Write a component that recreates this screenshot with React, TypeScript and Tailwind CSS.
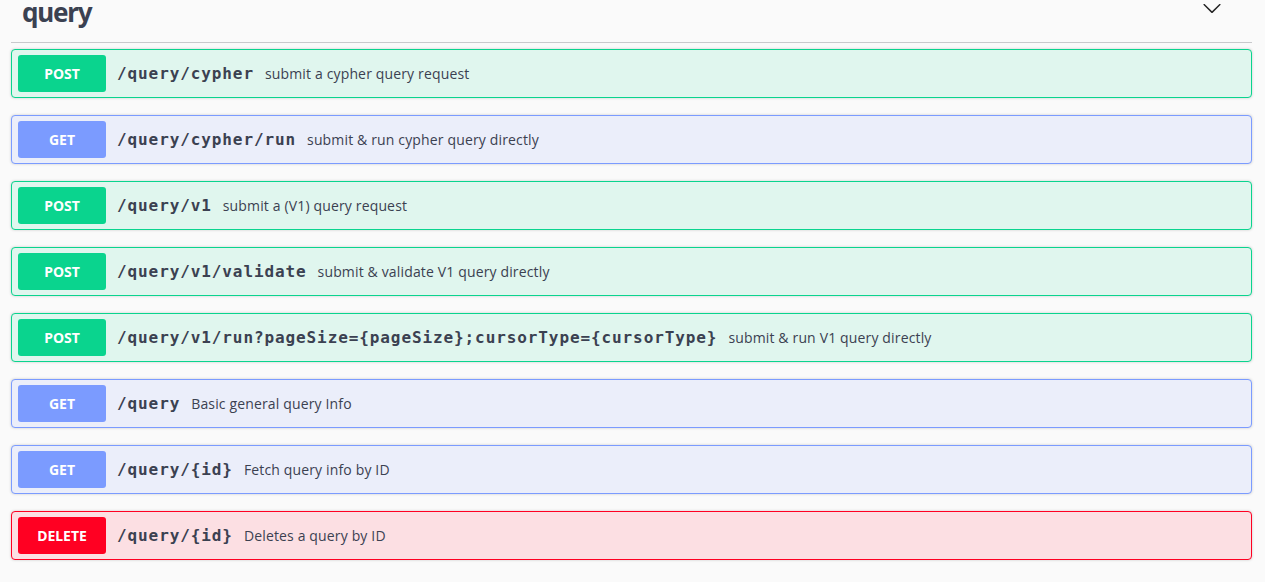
type Method = "POST" | "GET" | "DELETE";

type Endpoint = {
  method: Method;
  path: string;
  summary: string;
};

const endpoints: Endpoint[] = [
  { method: "POST", path: "/query/cypher", summary: "submit a cypher query request" },
  { method: "GET", path: "/query/cypher/run", summary: "submit & run cypher query directly" },
  { method: "POST", path: "/query/v1", summary: "submit a (V1) query request" },
  { method: "POST", path: "/query/v1/validate", summary: "submit & validate V1 query directly" },
  {
    method: "POST",
    path: "/query/v1/run?pageSize={pageSize};cursorType={cursorType}",
    summary: "submit & run V1 query directly",
  },
  { method: "GET", path: "/query", summary: "Basic general query Info" },
  { method: "GET", path: "/query/{id}", summary: "Fetch query info by ID" },
  { method: "DELETE", path: "/query/{id}", summary: "Deletes a query by ID" },
];

const styles: Record<Method, { row: string; badge: string }> = {
  POST: {
    row: "bg-[#e0f6ee] border-[#0ad48e]",
    badge: "bg-[#0ad48e]",
  },
  GET: {
    row: "bg-[#ebeefa] border-[#7b9bff]",
    badge: "bg-[#7b9bff]",
  },
  DELETE: {
    row: "bg-[#fcdfe3] border-[#ff0022]",
    badge: "bg-[#ff0022]",
  },
};

const OperationRow = ({ method, path, summary }: Endpoint) => {
  const s = styles[method];
  return (
    <div
      className={`${s.row} mb-[17px] flex items-center rounded-[4px] border px-[6px] py-[5px] shadow-[0_0_3px_rgba(0,0,0,0.19)]`}
    >
      <span
        className={`${s.badge} flex h-[37px] w-[88px] shrink-0 items-center justify-center rounded-[3px] text-[14px] font-bold text-white [font-family:'Noto_Sans',sans-serif]`}
      >
        {method}
      </span>
      <span className="ml-[11px] text-[16px] font-bold tracking-[0.9px] text-[#3b4151] [font-family:'DejaVu_Sans_Mono',monospace]">
        {path}
      </span>
      <span className="ml-[11px] text-[14px] tracking-[0.15px] text-[#3b4151] [font-family:'Open_Sans',sans-serif]">
        {summary}
      </span>
    </div>
  );
};

export default function App() {
  return (
    <div className="min-h-[582px] bg-[#fafafa] pl-[11px] pr-[13px]">
      {/* tag header, scrolled partly out of view */}
      <div className="flex h-[43px] items-start justify-between border-b border-[#c8c9cc]">
        <h3 className="-mt-[8px] ml-[11px] text-[26px] leading-[40px] font-bold tracking-[-1.2px] text-[#3b4151] [font-family:'Noto_Sans',sans-serif]">
          query
        </h3>
        <svg
          className="-mt-[2px] mr-[30px]"
          width="20"
          height="20"
          viewBox="0 0 20 20"
          fill="#222"
        >
          <path d="M17.418 6.109c.272-.268.709-.268.979 0s.271.701 0 .969l-7.908 7.83c-.27.268-.707.268-.979 0l-7.908-7.83c-.27-.268-.27-.701 0-.969.271-.268.709-.268.979 0L10 13.25l7.418-7.141z" />
        </svg>
      </div>
      <div className="pt-[6px]">
        {endpoints.map((e, i) => (
          <OperationRow key={i} {...e} />
        ))}
      </div>
    </div>
  );
}
